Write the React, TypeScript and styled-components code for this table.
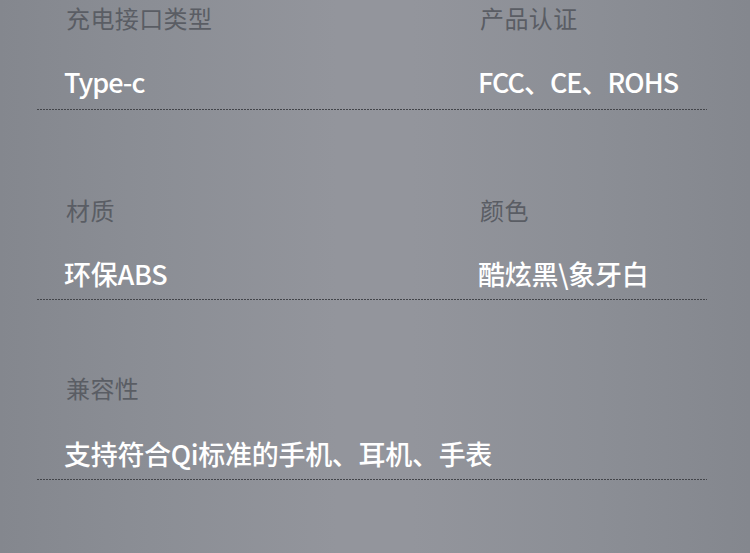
import React, { FC } from 'react';
import styled, { createGlobalStyle } from 'styled-components';

const GlobalStyle = createGlobalStyle`
  html, body {
    margin: 0;
    padding: 0;
  }
  body {
    width: 750px;
    height: 553px;
    overflow: hidden;
    font-family: "Noto Sans CJK SC", "Noto Sans", sans-serif;
    background: linear-gradient(to right, #84878e 0%, #8b8e95 20%, #93959c 45%, #93959c 55%, #8b8e95 80%, #84878e 100%);
  }
`;

const Page = styled.div`
  width: 750px;
  height: 553px;
  padding: 0 43px 0 37px;
  box-sizing: border-box;
`;

const Section = styled.section<{ $top: number }>`
  display: grid;
  grid-template-columns: 414px 1fr;
  padding-left: 27px;
  margin-top: ${(p) => p.$top}px;
`;

const Cell = styled.div`
  display: flex;
  flex-direction: column;
`;

const Label = styled.div`
  font-size: 24px;
  line-height: 36px;
  color: #5a5d64;
  padding-left: 2px;
  letter-spacing: 0.4px;
`;

const Value = styled.div<{ $gap: number; $tight?: boolean }>`
  margin-top: ${(p) => p.$gap}px;
  font-size: 27px;
  font-weight: 500;
  line-height: 40px;
  letter-spacing: ${(p) => (p.$tight ? '-1px' : '-0.3px')};
  color: #ffffff;
  white-space: nowrap;
`;

const Rule = styled.div<{ $gap: number }>`
  margin-top: ${(p) => p.$gap}px;
  height: 1px;
  background: repeating-linear-gradient(to right, #43454a 0, #43454a 2px, transparent 2px, transparent 3px);
`;

type Spec = { label: string; value: string; tight?: boolean };

const rows: { top: number; gap: number; bottom: number; items: Spec[] }[] = [
  {
    top: 0,
    gap: 26,
    bottom: 7,
    items: [
      { label: '充电接口类型', value: 'Type-c', tight: true },
      { label: '产品认证', value: 'FCC、CE、ROHS', tight: true },
    ],
  },
  {
    top: 82,
    gap: 26,
    bottom: 5,
    items: [
      { label: '材质', value: '环保ABS' },
      { label: '颜色', value: '酷炫黑\\象牙白' },
    ],
  },
  {
    top: 70,
    gap: 28,
    bottom: 5,
    items: [{ label: '兼容性', value: '支持符合Qi标准的手机、耳机、手表' }],
  },
];

const App: FC = () => {
  return (
    <>
      <GlobalStyle />
      <Page>
        {rows.map((row, i) => (
          <React.Fragment key={i}>
            <Section $top={row.top}>
              {row.items.map((item) => (
                <Cell key={item.label}>
                  <Label>{item.label}</Label>
                  <Value $gap={row.gap} $tight={item.tight}>
                    {item.value}
                  </Value>
                </Cell>
              ))}
            </Section>
            <Rule $gap={row.bottom} />
          </React.Fragment>
        ))}
      </Page>
    </>
  );
};

export default App;
